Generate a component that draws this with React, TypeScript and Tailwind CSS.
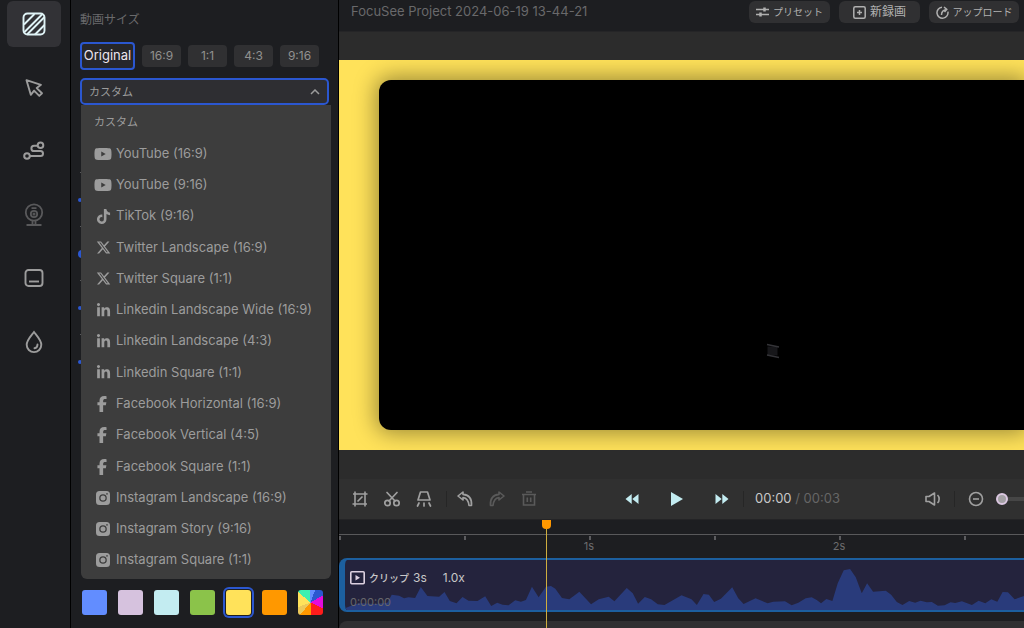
import { useState, type ReactNode } from 'react';
import { FaFacebookF, FaLinkedinIn, FaTiktok, FaXTwitter, FaYoutube } from 'react-icons/fa6';

interface SizeOption {
  label: string;
  icon?: ReactNode;
}

const InstagramIcon = () => (
  <svg viewBox="0 0 16 16" className="size-4" fill="currentColor" fillRule="evenodd">
    <path d="M4.500 1h7A3.500 3.500 0 0 1 15 4.500v7a3.500 3.500 0 0 1-3.500 3.500h-7A3.500 3.500 0 0 1 1 11.500v-7A3.500 3.500 0 0 1 4.500 1ZM8 4.200a3.800 3.800 0 1 0 0 7.600 3.800 3.800 0 0 0 0-7.600Zm0 1.300a2.500 2.500 0 1 1 0 5 2.500 2.500 0 0 1 0-5Zm4-2.400a.8.8 0 1 0 0 1.600.8.8 0 0 0 0-1.600Z" />
  </svg>
);

const youtube = <FaYoutube className="size-[18px]" />;
const twitter = <FaXTwitter className="size-[15px]" />;
const linkedin = <FaLinkedinIn className="size-[15px]" />;
const facebook = <FaFacebookF className="mr-0.5 size-4" />;
const instagram = <InstagramIcon />;

const sizeOptions: SizeOption[] = [
  { label: 'カスタム' },
  { label: 'YouTube (16:9)', icon: youtube },
  { label: 'YouTube (9:16)', icon: youtube },
  { label: 'TikTok (9:16)', icon: <FaTiktok className="size-[15px]" /> },
  { label: 'Twitter Landscape (16:9)', icon: twitter },
  { label: 'Twitter Square (1:1)', icon: twitter },
  { label: 'Linkedin Landscape Wide (16:9)', icon: linkedin },
  { label: 'Linkedin Landscape (4:3)', icon: linkedin },
  { label: 'Linkedin Square (1:1)', icon: linkedin },
  { label: 'Facebook Horizontal (16:9)', icon: facebook },
  { label: 'Facebook Vertical (4:5)', icon: facebook },
  { label: 'Facebook Square (1:1)', icon: facebook },
  { label: 'Instagram Landscape (16:9)', icon: instagram },
  { label: 'Instagram Story (9:16)', icon: instagram },
  { label: 'Instagram Square (1:1)', icon: instagram },
];

const ratios = ['16:9', '1:1', '4:3', '9:16'];

const swatches = [
  { name: 'Blue', color: 'bg-[#628dff]' },
  { name: 'Lilac', color: 'bg-[#d6c2de]' },
  { name: 'Ice', color: 'bg-[#c3ecf1]' },
  { name: 'Green', color: 'bg-[#8bc34a]' },
  { name: 'Yellow', color: 'bg-[#ffe25a]' },
  { name: 'Orange', color: 'bg-[#ff9800]' },
  {
    name: 'Custom color',
    color:
      'bg-[conic-gradient(#628dff_0_20deg,#2b57d0_20deg_60deg,#e40cdc_60deg_115deg,#ff1c1c_115deg_180deg,#ff9800_180deg_220deg,#ecc95a_220deg_250deg,#ffe25a_250deg_310deg,#3df0b0_310deg_360deg)]',
  },
];

const tools = [
  {
    name: 'Background',
    icon: (
      <svg viewBox="0 0 24 24" className="size-6 text-[#dff3f6]" fill="none" stroke="currentColor" strokeWidth="1.900">
        <rect x="1.500" y="1.500" width="21" height="21" rx="4" />
        <path d="M2 12.500 12.500 2M2 20.500 20.500 2M5 22.500 22.500 5M13 22.500 22.500 13" />
      </svg>
    ),
  },
  {
    name: 'Cursor',
    icon: (
      <svg viewBox="0 0 20 20" className="size-5" fill="none" stroke="currentColor" strokeWidth="1.900" strokeLinejoin="round">
        <path d="M2.500 2.200 17 6.800l-4.300 3.300 5.300 5.200-2.700 2.600-5.200-5.300-3.300 4.200Z" />
      </svg>
    ),
  },
  {
    name: 'Motion path',
    icon: (
      <svg viewBox="0 0 22 20" className="h-5 w-[22px]" fill="none" stroke="currentColor" strokeWidth="2">
        <circle cx="4" cy="15" r="2.800" />
        <circle cx="17.500" cy="4.300" r="2.800" />
        <path d="M14.700 4.800H11a2.600 2.600 0 0 0 0 5.200h6.500a2.500 2.500 0 0 1 0 5H6.800" />
      </svg>
    ),
  },
  {
    name: 'Webcam',
    icon: (
      <svg viewBox="0 0 20 24" className="h-6 w-5 text-[#59595b]" fill="none" stroke="currentColor" strokeWidth="1.800">
        <circle cx="10" cy="9.500" r="8.200" />
        <circle cx="10" cy="11" r="3.200" />
        <circle cx="10" cy="11" r=".6" />
        <path d="M7.500 5.200h5M8.500 17.500v4M11.500 17.500v4M2.500 22h15" />
      </svg>
    ),
  },
  {
    name: 'Captions',
    icon: (
      <svg viewBox="0 0 20 20" className="size-5" fill="none" stroke="currentColor" strokeWidth="1.900">
        <rect x="1.500" y="2" width="17" height="16" rx="3" />
        <path d="M5 13.500h10" />
      </svg>
    ),
  },
  {
    name: 'Watermark',
    icon: (
      <svg viewBox="0 0 20 24" className="h-6 w-5" fill="none" stroke="currentColor" strokeWidth="1.900" strokeLinecap="round">
        <path d="M10 2C7 6 2.700 10.200 2.700 14.800a7.300 7.300 0 0 0 14.600 0C17.300 10.200 13 6 10 2Z" />
        <path d="M13.500 14.500c0 2-1.200 3.500-3 3.800" />
      </svg>
    ),
  },
];

const WAVE =
  'M18,570 18,565 40,556 60,550 110,552 145,548 158,524 180,527 195,535 208,532 228,534 245,501 265,528 300,530 316,516 332,543 352,550 370,531 388,542 415,543 438,529 456,558 474,548 490,554 508,556 528,541 545,545 560,540 578,500 598,532 620,500 635,498 648,506 668,534 690,538 720,515 755,553 778,538 808,530 825,544 862,504 880,520 896,551 916,531 935,538 955,553 975,555 1000,541 1026,526 1056,538 1072,555 1092,522 1108,524 1124,546 1144,536 1178,502 1196,535 1212,552 1248,535 1284,550 1301,545 1336,544 1356,556 1376,548 1398,535 1416,532 1431,540 1444,550 1460,537 1478,543 1494,490 1512,451 1531,447 1548,472 1566,520 1582,490 1600,515 1638,512 1654,524 1671,546 1688,555 1708,543 1726,548 1742,542 1761,547 1776,546 1794,557 1814,556 1832,547 1846,549 1866,544 1896,555 1916,542 1936,550 1954,538 1972,545 1988,516 2004,517 2024,538 2052,528 2052,570Z';

function Toolbar() {
  const iconClass = 'size-[18px]';
  const button = 'flex size-5 shrink-0 items-center justify-center text-[#a0a0a0]';
  return (
    <div className="flex h-[41px] shrink-0 items-center justify-between border-b border-[#242426] bg-[#303030] pl-[11px]">
      <div className="flex items-center gap-3">
        <button aria-label="Crop" className={button}>
          <svg viewBox="0 0 18 18" className={iconClass} fill="none" stroke="currentColor" strokeWidth="1.600">
            <path d="M2 4h14.500M1.500 14H16M4 1.500v15M14 1.500v15M6.500 11.500l5-5" />
          </svg>
        </button>
        <button aria-label="Split" className={button}>
          <svg viewBox="0 0 18 18" className={iconClass} fill="none" stroke="currentColor" strokeWidth="1.700" strokeLinecap="round">
            <circle cx="4.500" cy="13" r="2.700" />
            <circle cx="13.500" cy="13" r="2.700" />
            <path d="M4 2.500 12 11M14 2.500 6 11" />
          </svg>
        </button>
        <button aria-label="Spotlight" className={button}>
          <svg viewBox="0 0 18 18" className={iconClass} fill="none" stroke="currentColor" strokeWidth="1.700" strokeLinecap="round" strokeLinejoin="round">
            <path d="M5.500 2h7l2.500 8H3ZM4 13l-1.500 3M9 13v3M14 13l1.500 3" />
          </svg>
        </button>
        <span className="-mr-1 h-4 w-px bg-[#262626]" />
        <button aria-label="Undo" className={button}>
          <svg viewBox="0 0 18 18" className={iconClass} fill="none" stroke="currentColor" strokeWidth="1.600" strokeLinejoin="round">
            <path d="M7 2 2 6l5 4V7.600c4 .4 5.500 3 6 7.900h2.500c.5-6.500-2.500-10.600-8.500-11.100Z" />
          </svg>
        </button>
        <button aria-label="Redo" className={button}>
          <svg viewBox="0 0 18 18" className="size-[18px] text-[#5a5a5a]" fill="none" stroke="currentColor" strokeWidth="1.600" strokeLinejoin="round">
            <path d="M11 2l5 4-5 4V7.600c-4 .4-5.500 3-6 7.900H2.500C2 9 5 4.900 11 4.400Z" />
          </svg>
        </button>
        <button aria-label="Delete" className={button}>
          <svg viewBox="0 0 18 18" className="size-[18px] text-[#5a5a5a]" fill="none" stroke="currentColor" strokeWidth="1.600">
            <path d="M2 4.500h14M6 2h6M3.500 4.500V15h11V4.500M7.300 7.500V12M10.700 7.500V12" />
          </svg>
        </button>
      </div>

      <div className="flex items-center text-[#c3ecf1]">
        <button aria-label="Rewind" className="flex size-5 items-center justify-center">
          <svg viewBox="0 0 14 10" className="h-[10px] w-[14px]" fill="currentColor">
            <path d="M6.700 0v10L.5 5ZM13.500 0v10L7.300 5Z" />
          </svg>
        </button>
        <button aria-label="Play" className="mx-[25px] flex size-5 items-center justify-center">
          <svg viewBox="0 0 14 14" className="size-[14px]" fill="currentColor">
            <path d="M1 0v14l12-7Z" />
          </svg>
        </button>
        <button aria-label="Forward" className="flex size-5 items-center justify-center">
          <svg viewBox="0 0 14 10" className="h-[10px] w-[14px]" fill="currentColor">
            <path d="M.5 0v10l6.200-5ZM7.300 0v10l6.200-5Z" />
          </svg>
        </button>
        <span className="mx-[11px] h-4 w-px bg-[#262626]" />
        <span className="text-[13px] text-[#c9c9c9]">
          00:00 <span className="text-[#666]">/ 00:03</span>
        </span>
      </div>

      <div className="flex items-center">
        <button aria-label="Volume" className={button}>
          <svg viewBox="0 0 18 18" className={iconClass} fill="none" stroke="currentColor" strokeWidth="1.600" strokeLinejoin="round">
            <path d="M2 6.500h3L10.500 3v12L5 11.500H2ZM13.500 5c2.200 2 2.200 6 0 8" />
          </svg>
        </button>
        <span className="mx-[11px] h-4 w-px bg-[#262626]" />
        <button aria-label="Zoom out" className={button}>
          <svg viewBox="0 0 18 18" className={iconClass} fill="none" stroke="currentColor" strokeWidth="1.600">
            <circle cx="9" cy="9" r="6.500" />
            <path d="M6 9h6" />
          </svg>
        </button>
        <div className="ml-[10px] flex w-7 overflow-hidden">
          <input
            type="range"
            aria-label="Timeline zoom"
            defaultValue={0}
            className="my-1 h-1 w-20 shrink-0 appearance-none rounded bg-[#464646] [&::-webkit-slider-thumb]:size-3 [&::-webkit-slider-thumb]:appearance-none [&::-webkit-slider-thumb]:rounded-full [&::-webkit-slider-thumb]:border-2 [&::-webkit-slider-thumb]:border-[#dcc8e2] [&::-webkit-slider-thumb]:bg-[#a3a0a4]"
          />
        </div>
      </div>
    </div>
  );
}

function Timeline() {
  return (
    <div className="relative h-[108px] shrink-0 overflow-hidden bg-[#1d1e21]">
      <div className="mt-[14px] flex h-6 border-t border-[#59595b] text-[11px] leading-3 text-[#6c6c6e]">
        {['', '', '1s', '', '2s', ''].map((label, i) => (
          <div key={i} className="w-[125px] shrink-0">
            <div className="mt-px h-1 w-0.5 bg-[#5c5c5f]" />
            <div className="w-8 -translate-x-1/2 text-center">{label}</div>
          </div>
        ))}
      </div>

      <div className="relative h-[54px] overflow-hidden rounded-l-lg border-y-2 border-l-[6px] border-[#1c5f9f] bg-[#24233d]">
        <svg viewBox="18 420 2034 150" preserveAspectRatio="none" className="absolute inset-0 size-full text-[#293b7b]" fill="currentColor">
          <path d={WAVE} />
        </svg>
        <div className="relative flex h-full flex-col justify-between pt-[10px] pl-[5px]">
          <div className="flex items-center text-xs leading-4 text-[#c8c8c8]">
            <svg viewBox="0 0 15 14" className="h-[14px] w-[15px] text-[#dcd0e0]" fill="none" stroke="currentColor" strokeWidth="1.600">
              <rect x=".8" y=".8" width="13.400" height="12" rx="1" />
              <path d="M5.500 4v5.600L10 6.800Z" fill="currentColor" stroke="none" />
            </svg>
            <span className="ml-1 text-[10px] font-medium">クリップ</span>
            <span className="ml-1">3s</span>
            <span className="ml-4">1.0x</span>
          </div>
          <span className="text-[11px] leading-4 text-[#67676b]">0:00:00</span>
        </div>
      </div>

      <div className="mt-[9px] h-10 rounded-l-lg bg-[#303032]" />

      {/* playhead */}
      <div className="absolute inset-y-0 left-[203px] flex w-[9px] flex-col items-center">
        <div className="h-[9px] w-[9px] shrink-0 rounded-b bg-[#ff9800]" />
        <div className="w-px grow bg-[#cfae3f]" />
      </div>
    </div>
  );
}

export default function App() {
  const [open, setOpen] = useState(true);
  const [size, setSize] = useState('カスタム');
  const [tool, setTool] = useState('Background');
  const [swatch, setSwatch] = useState('Yellow');
  const [ratio, setRatio] = useState('Original');

  const headerButton = 'flex h-[22px] items-center justify-center gap-1 rounded-md bg-[#303032] text-[#b0b0b0]';

  return (
    <div className="flex h-screen overflow-hidden bg-[#1d1e21] font-[Inter,'Noto_Sans_CJK_JP',sans-serif] text-[#9c9c9c]">
      <nav className="w-[71px] shrink-0 border-r border-black pt-px">
        <div className="flex h-[364px] flex-col items-start justify-between pl-[7px]">
          {tools.map((item) => (
            <button
              key={item.name}
              aria-label={item.name}
              onClick={() => setTool(item.name)}
              className={`flex h-[46px] w-[54px] items-center justify-center rounded-md ${tool === item.name ? 'bg-[#323236]' : ''}`}
            >
              {item.icon}
            </button>
          ))}
        </div>
      </nav>

      <aside className="flex w-[268px] shrink-0 flex-col border-r border-black px-[9px] pt-[10px]">
        <h2 className="text-xs leading-5 text-[#6a6a6c]">動画サイズ</h2>
        <div className="mt-3 flex items-center gap-[7px]">
          <button
            onClick={() => setRatio('Original')}
            className={`flex h-7 w-[55px] items-center justify-center rounded border-2 bg-[#26262a] text-[13px] text-[#ece4ee] ${ratio === 'Original' ? 'border-[#2b57d0]' : 'border-transparent'}`}
          >
            Original
          </button>
          {ratios.map((item) => (
            <button
              key={item}
              onClick={() => setRatio(item)}
              className={`h-[22px] w-[39px] rounded bg-[#303032] text-xs text-[#909090] ${ratio === item ? 'ring-2 ring-[#2b57d0]' : ''}`}
            >
              {item}
            </button>
          ))}
        </div>

        <div className="relative mt-2 w-[249px]">
          <select
            aria-label="動画サイズ"
            value={size}
            onMouseDown={(e) => {
              e.preventDefault();
              setOpen(!open);
            }}
            onChange={(e) => setSize(e.target.value)}
            className="block h-[27px] w-full appearance-none rounded-[5px] border-2 border-[#2b57d0] bg-[#2e2e32] px-[7px] text-[11px] leading-4 outline-none"
          >
            {sizeOptions.map((item) => (
              <option key={item.label}>{item.label}</option>
            ))}
          </select>
          <svg viewBox="0 0 10 6" className="pointer-events-none absolute top-[11px] right-[9px] h-1.5 w-[10px]" fill="none" stroke="currentColor" strokeWidth="1.500">
            <path d="m1 5 4-4 4 4" />
          </svg>
          {open && (
            <ul role="listbox" className="absolute top-full left-px z-10 grid h-[474px] w-[250px] auto-rows-fr rounded-b-md bg-[#3d3d3d] pt-px pb-1">
              {sizeOptions.map((item) => (
                <li key={item.label} role="option" aria-selected={item.label === size} className="flex">
                  <button
                    onClick={() => {
                      setSize(item.label);
                      setOpen(false);
                    }}
                    className="flex flex-1 items-center gap-1 pl-[13px] text-[13px] leading-5 whitespace-nowrap hover:bg-[#484848]"
                  >
                    {item.icon ? (
                      <>
                        <span className="flex w-[18px] shrink-0 justify-center pt-0.5">{item.icon}</span>
                        {item.label}
                      </>
                    ) : (
                      <span className="text-[11px]">{item.label}</span>
                    )}
                  </button>
                </li>
              ))}
            </ul>
          )}
        </div>

        {/* slider rows, mostly covered by the open menu */}
        <div className="mt-[67px] flex flex-col gap-[22px]">
          {['size-1', 'size-2', 'size-1', 'size-1'].map((knob, i) => (
            <div key={i} className="flex h-8 flex-col justify-between">
              <div className="h-px w-3 bg-[#59595b]" />
              <div className="flex h-2 items-center">
                <div className={`-ml-0.5 rounded-full bg-[#2b57d0] ${knob}`} />
              </div>
            </div>
          ))}
        </div>

        <div className="mt-auto flex gap-[11px] pb-[13px] pl-0.5">
          {swatches.map((item) => (
            <button
              key={item.name}
              aria-label={item.name}
              onClick={() => setSwatch(item.name)}
              className={`size-[25px] shrink-0 rounded-[3px] ${item.color} ${swatch === item.name ? 'ring-2 ring-[#2b57d0] ring-offset-1 ring-offset-[#1d1e21]' : ''}`}
            />
          ))}
        </div>
      </aside>

      <main className="flex min-w-0 flex-1 flex-col">
        <header className="flex h-[31px] shrink-0 items-start justify-between pt-px pr-[5px] pl-3">
          <h1 className="text-[13px] leading-5 text-[#69696b]">FocuSee Project 2024-06-19 13-44-21</h1>
          <div className="flex gap-[9px]">
            <button className={`${headerButton} w-[81px]`}>
              <svg viewBox="0 0 13 12" className="h-3 w-[13px]" fill="none" stroke="currentColor" strokeWidth="1.500">
                <path d="M0 3.500h13M0 8.500h13" />
                <path d="M8.500 1.500v4M4.500 6.500v4" strokeWidth="2.500" />
              </svg>
              <span className="text-[10px]">プリセット</span>
            </button>
            <button className={`${headerButton} w-[81px]`}>
              <svg viewBox="0 0 13 13" className="size-[13px]" fill="none" stroke="currentColor" strokeWidth="1.500">
                <rect x=".8" y=".8" width="11.400" height="11.400" rx="1.500" />
                <path d="M6.500 4v5M4 6.500h5" />
              </svg>
              <span className="text-xs">新録画</span>
            </button>
            <button className={`${headerButton} w-[90px]`}>
              <svg viewBox="0 0 13 13" className="size-[13px]" fill="none" stroke="currentColor" strokeWidth="1.500">
                <path d="M6 1.200a5.500 5.500 0 1 0 5.900 4.500" />
                <path d="M5.500 9c0-3 1.500-5 5-5.500M8 1l2.800 2.400L8.500 6" />
              </svg>
              <span className="text-[10px]">アップロード</span>
            </button>
          </div>
        </header>

        <section className="flex min-h-0 flex-1 flex-col border-t border-[#252527] bg-[#2c2c2c] pt-7 pb-[29px]">
          <div className="flex min-h-0 flex-1 overflow-hidden bg-[#ffe25a] py-5 pl-10">
            <div className="relative flex-1 rounded-l-xl bg-black shadow-[0_0_22px_3px_rgba(0,0,0,0.4)]">
              <svg viewBox="0 0 14 16" className="absolute top-[75%] left-[60%] h-4 w-[14px]" fill="none">
                <path d="M1.500 3.500h10v9h-10Z" fill="#17171a" />
                <path d="m1 1.500 12 2.500M1 12l12 2.500" stroke="#343438" strokeWidth="1.300" />
              </svg>
            </div>
          </div>
        </section>

        <Toolbar />
        <Timeline />
      </main>
    </div>
  );
}
